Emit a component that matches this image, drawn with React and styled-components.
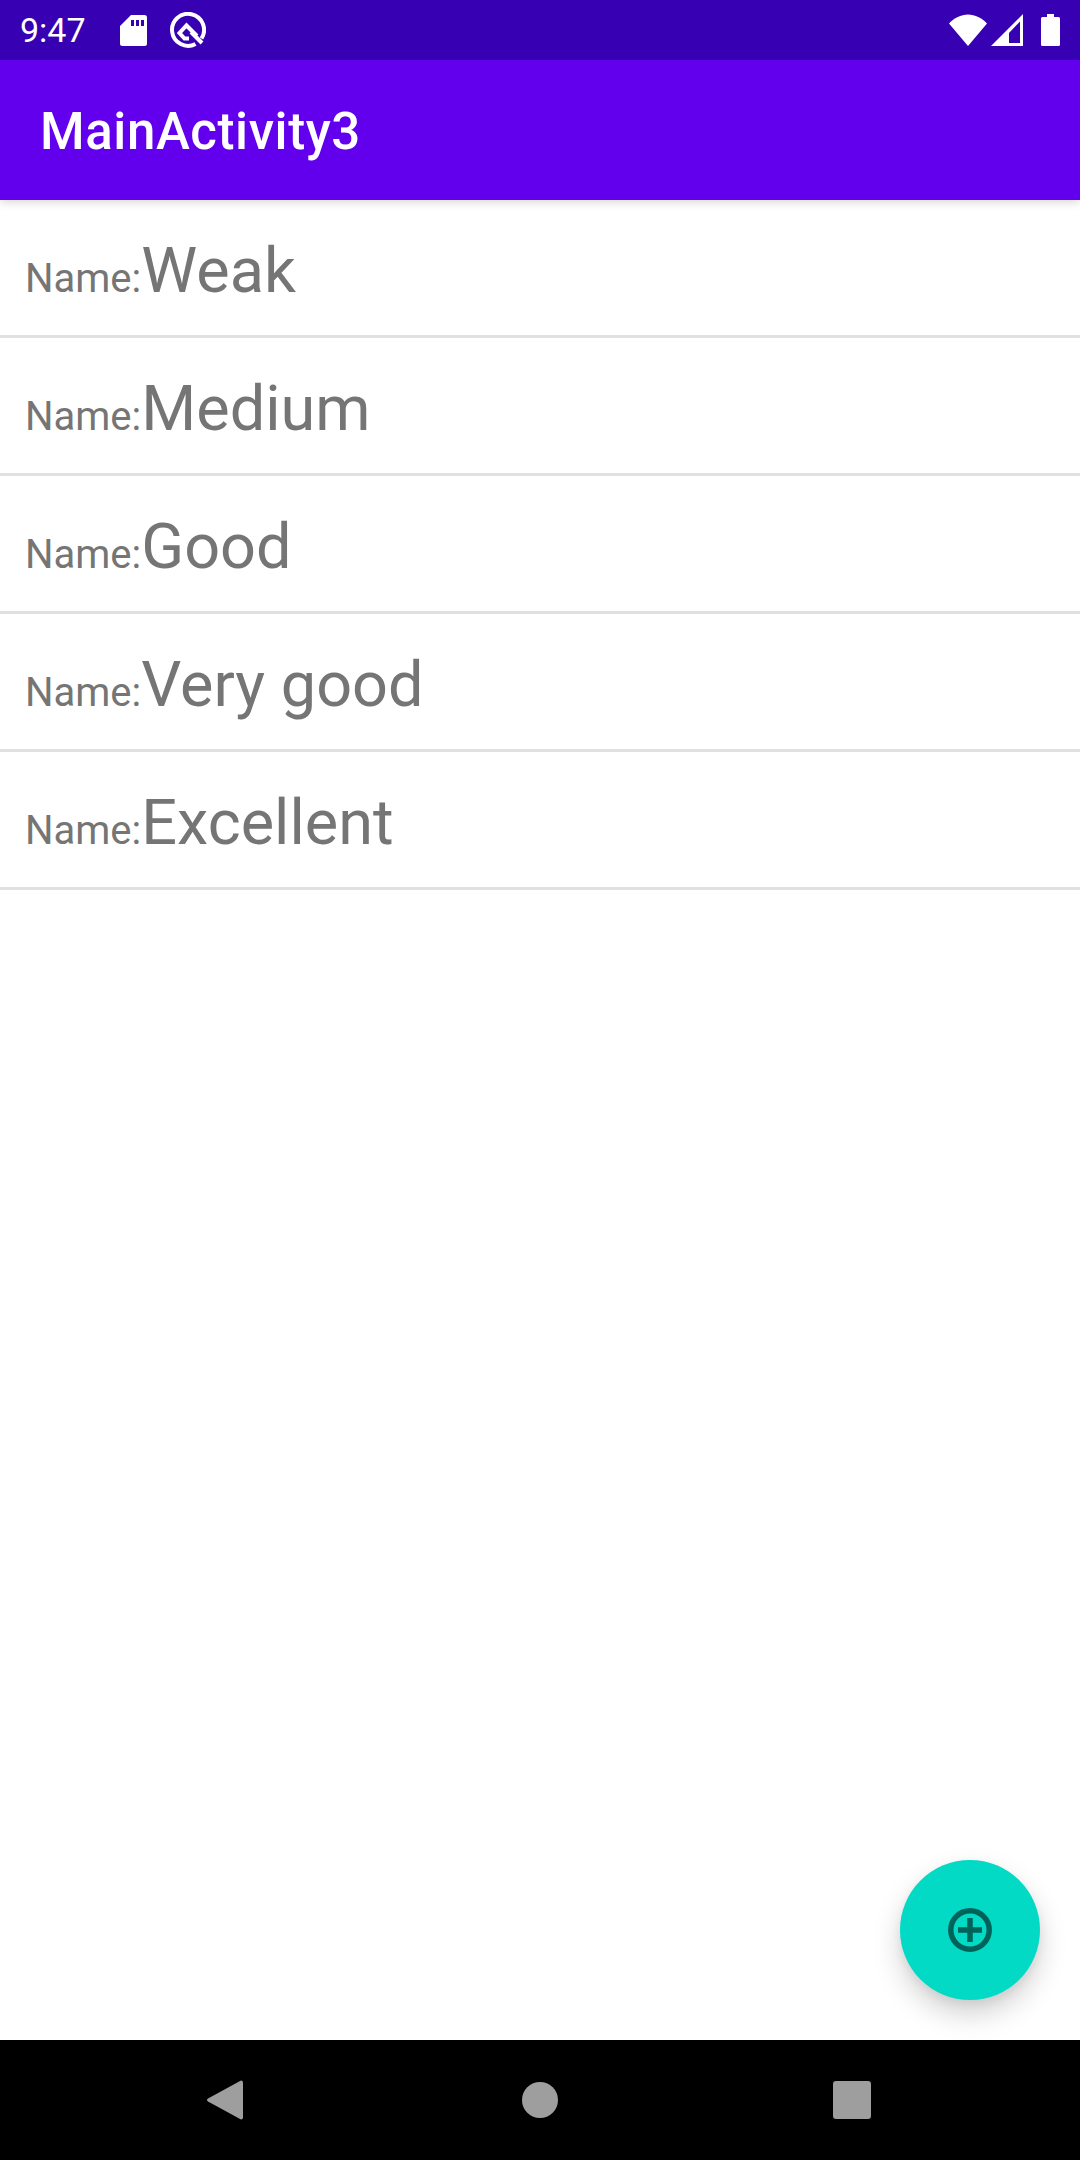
import styled, { createGlobalStyle } from 'styled-components';

const GlobalStyle = createGlobalStyle`
  html, body {
    margin: 0;
    padding: 0;
    background: #ffffff;
  }
`;

const Screen = styled.div`
  position: relative;
  display: flex;
  flex-direction: column;
  width: 1080px;
  height: 2160px;
  overflow: hidden;
  font-family: Roboto, "Liberation Sans", sans-serif;
`;

const StatusBar = styled.div`
  display: flex;
  align-items: center;
  justify-content: space-between;
  height: 60px;
  padding: 0 20px 0 20px;
  box-sizing: border-box;
  background: #3700b3;
  color: #ffffff;
`;

const StatusLeft = styled.div`
  display: flex;
  align-items: center;
`;

const StatusRight = styled.div`
  display: flex;
  align-items: center;
`;

const Clock = styled.span`
  font-size: 34px;
  line-height: 60px;
  width: 100px;
`;

const AppBar = styled.header`
  position: relative;
  z-index: 1;
  display: flex;
  align-items: center;
  height: 140px;
  padding: 3px 0 0 40px;
  box-sizing: border-box;
  background: #6200ee;
  box-shadow: 0 3px 8px rgba(0, 0, 0, 0.14);
`;

const Title = styled.h1`
  margin: 0;
  color: #ffffff;
  font-size: 51px;
  font-weight: 500;
  letter-spacing: 0.6px;
`;

const List = styled.main`
  flex: 1;
  background: #ffffff;
`;

const Row = styled.div`
  display: flex;
  align-items: baseline;
  height: 138px;
  padding: 34px 0 0 25px;
  box-sizing: border-box;
  border-bottom: 3px solid #e0e0e0;
  color: #757575;
`;

const Label = styled.span`
  font-size: 40px;
`;

const Value = styled.span`
  font-size: 63px;
`;

const Fab = styled.button`
  position: absolute;
  left: 900px;
  top: 1860px;
  display: flex;
  align-items: center;
  justify-content: center;
  width: 140px;
  height: 140px;
  padding: 0;
  border: none;
  border-radius: 50%;
  background: #03dac5;
  box-shadow: 0 14px 28px rgba(0, 0, 0, 0.18), 0 4px 10px rgba(0, 0, 0, 0.06);
`;

const NavBar = styled.nav`
  display: flex;
  align-items: center;
  height: 120px;
  background: #000000;
`;

const NavSlot = styled.div`
  display: flex;
  justify-content: center;
  width: ${(p) => p.$width}px;
`;

const rows = ['Weak', 'Medium', 'Good', 'Very good', 'Excellent'];

function SdCard() {
  return (
    <svg width="27" height="32" viewBox="0 0 27 32">
      <path
        fill="#fff"
        fillRule="evenodd"
        d="M11 1h13.5A2.5 2.5 0 0 1 27 3.500v26a2.5 2.5 0 0 1-2.5 2.500h-22A2.5 2.5 0 0 1 0 29.500V12zM11 6v6h3V6zM16 6v6h3V6zM21 6v6h3V6z"
      />
    </svg>
  );
}

function QLogo() {
  return (
    <svg width="36" height="36" viewBox="0 0 36 36" style={{ marginLeft: 23 }}>
      <path
        fill="none"
        stroke="#fff"
        strokeWidth="4"
        d="M25.500 32A16 16 0 1 1 31.500 26.500"
      />
      <path
        fill="none"
        stroke="#fff"
        strokeWidth="4"
        d="M19 26.500H14.500L9.500 21l7-7.500L27 24"
      />
      <path fill="none" stroke="#fff" strokeWidth="4" d="M21 20l11 11" />
    </svg>
  );
}

function Wifi() {
  return (
    <svg width="38" height="32" viewBox="0 0 38 32">
      <path fill="#fff" d="M19 32L0 9.500C5 4 12 0.500 19 0.500S33 4 38 9.500z" />
    </svg>
  );
}

function Signal() {
  return (
    <svg width="32" height="32" viewBox="0 0 32 32" style={{ marginLeft: 4 }}>
      <path
        fill="#fff"
        fillRule="evenodd"
        d="M32 0v32H0zM29 7.500L18 19v10h11z"
      />
    </svg>
  );
}

function Battery() {
  return (
    <svg width="19" height="32" viewBox="0 0 19 32" style={{ marginLeft: 18 }}>
      <path
        fill="#fff"
        d="M6 0h7v3h4.500A1.500 1.500 0 0 1 19 4.500v26a1.500 1.500 0 0 1-1.500 1.500h-16A1.500 1.500 0 0 1 0 30.500v-26A1.500 1.500 0 0 1 1.500 3H6z"
      />
    </svg>
  );
}

function AddCircle() {
  return (
    <svg width="44" height="44" viewBox="0 0 44 44">
      <circle cx="22" cy="22" r="19.200" fill="none" stroke="#00635a" strokeWidth="5.500" />
      <path fill="none" stroke="#00635a" strokeWidth="5.500" d="M10 22h24M22 10v24" />
    </svg>
  );
}

export default function App() {
  return (
    <Screen>
      <GlobalStyle />
      <StatusBar>
        <StatusLeft>
          <Clock>9:47</Clock>
          <SdCard />
          <QLogo />
        </StatusLeft>
        <StatusRight>
          <Wifi />
          <Signal />
          <Battery />
        </StatusRight>
      </StatusBar>
      <AppBar>
        <Title>MainActivity3</Title>
      </AppBar>
      <List>
        {rows.map((name) => (
          <Row key={name}>
            <Label>Name:</Label>
            <Value>{name}</Value>
          </Row>
        ))}
      </List>
      <Fab>
        <AddCircle />
      </Fab>
      <NavBar>
        <NavSlot $width={450}>
          <svg width="36" height="40" viewBox="0 0 36 40">
            <path fill="#9e9e9e" d="M34 0.500q2 0 2 2v35q0 2-2 2L1 21.500q-2-1.500 0-3z" />
          </svg>
        </NavSlot>
        <NavSlot $width={180}>
          <svg width="36" height="36" viewBox="0 0 36 36">
            <circle cx="18" cy="18" r="18" fill="#9e9e9e" />
          </svg>
        </NavSlot>
        <NavSlot $width={444}>
          <svg width="38" height="38" viewBox="0 0 38 38">
            <rect width="38" height="38" rx="3" fill="#9e9e9e" />
          </svg>
        </NavSlot>
      </NavBar>
    </Screen>
  );
}
